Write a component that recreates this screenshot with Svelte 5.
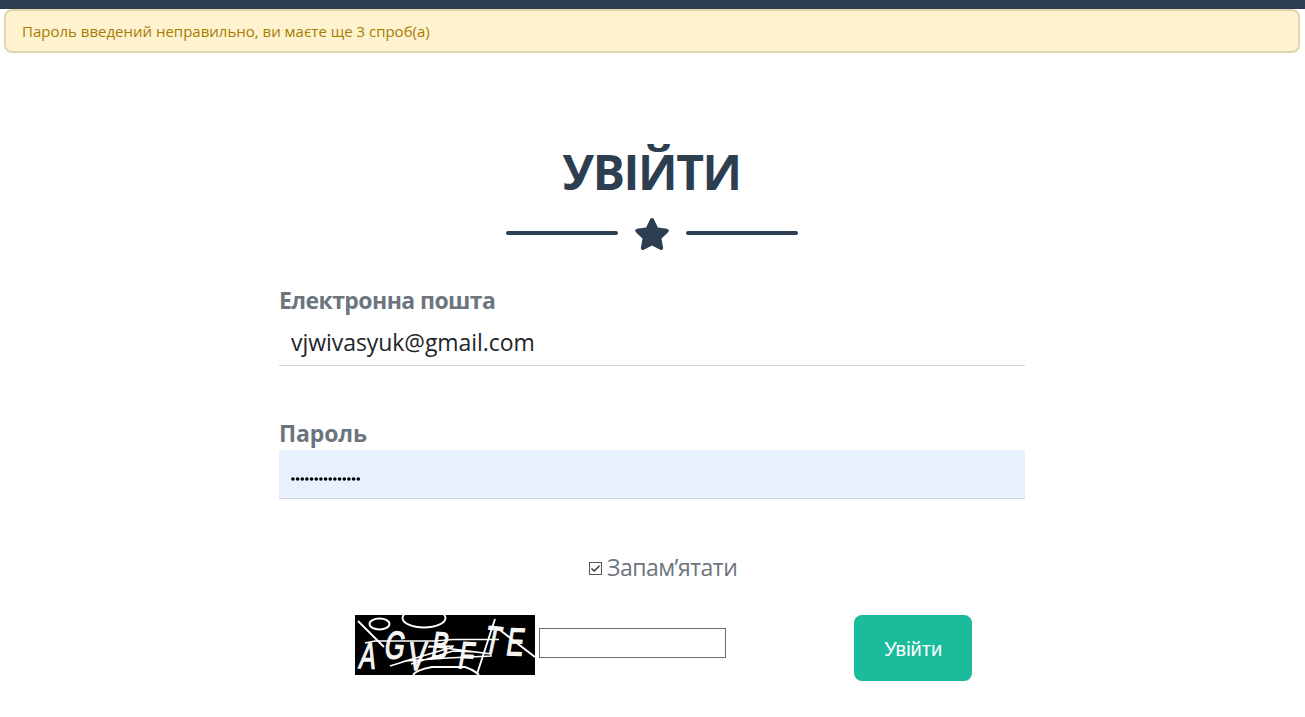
<script>
  let email = $state('vjwivasyuk@gmail.com');
  let remember = $state(true);
  let code = $state('');
  const dots = Array.from({ length: 15 }, (_, i) => i);
  const letters = [
    { c: 'A', x: 3, y: 53, r: 2, s: 37 },
    { c: 'G', x: 28, y: 43, r: 3, s: 39 },
    { c: 'V', x: 52, y: 55, r: 0, s: 40 },
    { c: 'B', x: 75, y: 43, r: 3, s: 38 },
    { c: 'F', x: 102, y: 53, r: 3, s: 38 },
    { c: 'T', x: 128, y: 37, r: 5, s: 38 },
    { c: 'E', x: 150, y: 40, r: 2, s: 39 }
  ];
</script>

<div class="page">
  <header class="topbar"></header>
  <div class="alert" role="alert"><span>Пароль введений неправильно, ви маєте ще 3 спроб(а)</span></div>

  <main>
    <h2>УВІЙТИ</h2>
    <div class="divider">
      <span class="line"></span>
      <svg class="star" viewBox="0 0 576 512" aria-hidden="true"><path fill="currentColor" d="M259.3 17.8L194 150.2 47.9 171.5c-26.2 3.8-36.7 36.1-17.7 54.6l105.7 103-25 145.5c-4.5 26.3 23.2 46 46.4 33.7L288 439.6l130.7 68.7c23.2 12.2 50.9-7.4 46.4-33.7l-25-145.5 105.7-103c19-18.5 8.5-50.8-17.7-54.6L382 150.2 316.7 17.8c-11.7-23.6-45.6-23.9-57.4 0z" /></svg>
      <span class="line"></span>
    </div>

    <form onsubmit={(e) => e.preventDefault()}>
      <div class="group">
        <label class="l1" for="email">Електронна пошта</label>
        <input id="email" class="field" bind:value={email} spellcheck="false" />
      </div>
      <div class="group">
        <label class="l2" for="password">Пароль</label>
        <div id="password" class="field filled">
          <svg viewBox="0 0 70 4">
            {#each dots as d (d)}<circle cx={1.9 + d * 4.667} cy="2" r="1.8" />{/each}
          </svg>
        </div>
      </div>
      <label class="remember">
        <input type="checkbox" bind:checked={remember} />
        <span class="box">
          {#if remember}<svg viewBox="0 0 11 11"><path d="M1.500 5.400L4.200 8.100L9.500 2.800" fill="none" stroke="#333" stroke-width="1.4" /></svg>{/if}
        </span>
        <span class="remember-text">Запам’ятати</span>
      </label>
      <div class="actions">
        <svg class="captcha" viewBox="0 0 180 60">
          <rect width="180" height="60" fill="#000" />
          <g fill="#f4f4f4" stroke="#f4f4f4" stroke-width="1.3">
            {#each letters as l (l.c)}
              <text transform={`translate(${l.x} ${l.y}) rotate(${l.r}) skewX(-7) scale(.66 1)`} font-size={l.s}>{l.c}</text>
            {/each}
          </g>
          <g fill="none" stroke="#fff" stroke-width="1.9">
            <ellipse cx="24.500" cy="9" rx="10" ry="5.500" />
            <ellipse cx="69" cy="3" rx="21.500" ry="9.500" />
            <path d="M3 6L29 32M141 12L180 42M140 4L122 59" />
            <path stroke-width="1.5" d="M10 28L20 26H80L98 24.500H144M73 32L99 31M35 51L51 46L92 43L136 41V39L74 31M47 47L98 32M56 49L98 36L121 37" />
            <path d="M58 60Q61 55 77 52H110Q119 55 124 60" />
          </g>
        </svg>
        <input class="code" bind:value={code} aria-label="Код" />
        <button type="submit">Увійти</button>
      </div>
    </form>
  </main>
</div>

<style>
  :global(body) { margin: 0; background: #fff; }
  .page { box-sizing: border-box; height: 717px; overflow: hidden; font-family: "Open Sans", "Noto Sans", sans-serif; color: #212529; }
  .topbar { height: 9px; background: #2c3e50; }
  .alert { box-sizing: border-box; height: 44px; margin: 0 5px 0 4px; padding: 0 16px; border: 2px solid #e0d5ae; border-radius: 8px; background: #fff2cf; color: #a67c00; font-size: 15px; line-height: 41px; }
  main { width: 746px; margin: 0 auto; padding: 90px 1px 0 0; }
  h2 { margin: 0; height: 58px; line-height: 58px; font-size: 48px; font-weight: 700; text-align: center; letter-spacing: -1.4px; text-indent: -1px; color: #2c3e50; }
  .divider { display: flex; justify-content: center; align-items: center; height: 32px; margin-top: 17px; gap: 16px; color: #2c3e50; }
  .line { width: 112px; height: 4px; border-radius: 4px; background: currentColor; margin-top: -2px; }
  .star { width: 36px; height: 32px; }
  form { margin-top: 33px; }
  .group { height: 133px; }
  .group label { display: block; width: max-content; height: 34px; line-height: 34px; font-size: 23px; font-weight: 700; color: #6c757d; }
  .l1 { letter-spacing: -.58px; }
  .l2 { letter-spacing: -.15px; }
  .field { box-sizing: border-box; display: block; width: 100%; height: 49px; padding: 2px 12px 0 12px; border: 0; border-bottom: 1px solid #ced4da; background: #fff; color: #212529; font: 23px/46px "Open Sans", "Noto Sans", sans-serif; letter-spacing: -.05px; outline: 0; }
  .filled { display: flex; align-items: center; padding-top: 10px; background: #e8f0fe; }
  .filled svg { width: 70px; height: 4px; }
  .remember { display: flex; align-items: center; justify-content: flex-start; height: 36px; padding-left: 310px; gap: 5px; font-size: 23px; letter-spacing: -.5px; color: #6c757d; }
  .remember input { display: none; }
  .remember-text { margin-top: -1px; }
  .box { box-sizing: border-box; width: 13px; height: 13px; border: 1px solid #555; margin-top: 3px; }
  .box svg { display: block; width: 11px; height: 11px; }
  .actions { display: flex; align-items: flex-start; margin-top: 30px; padding-left: 76px; }
  .captcha { width: 180px; height: 60px; overflow: visible; font-family: "Liberation Sans", sans-serif; }
  .code { box-sizing: border-box; width: 187px; height: 30px; margin: 13px 0 0 4px; border: 1px solid #6b6b6b; background: #fff; outline: 0; }
  button { width: 118px; height: 66px; margin-left: 128px; padding: 2px 0 0; border: 0; border-radius: 8px; background: #1abc9c; color: #fff; font: 20px "Liberation Sans", sans-serif; }
</style>
